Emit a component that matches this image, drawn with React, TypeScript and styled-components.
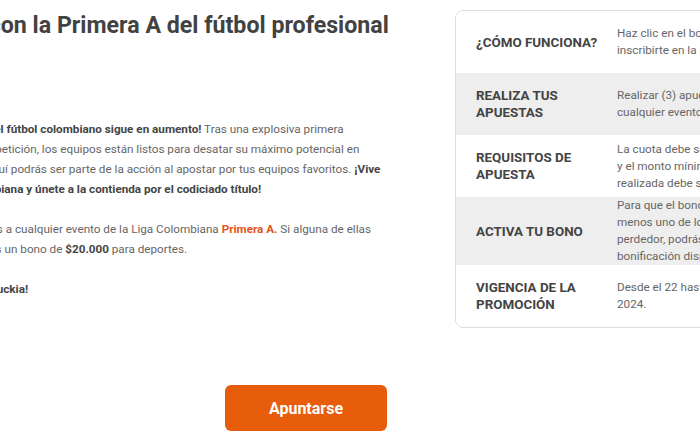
import React from "react";
import styled, { createGlobalStyle } from "styled-components";

const Global = createGlobalStyle`
  html, body { margin: 0; padding: 0; overflow: hidden; background: #fff; }
  body { font-family: Roboto, "Liberation Sans", Arial, sans-serif; }
`;

const Page = styled.div`
  width: 700px;
  height: 441px;
  overflow: hidden;
`;

const Main = styled.div`
  display: flex;
  align-items: flex-start;
  gap: 38px;
`;

const LeftCol = styled.section`
  flex: 0 0 520px;
  margin-left: -103px;
`;

const Title = styled.h1`
  margin: 10px 0 0;
  font-size: 23.2px;
  line-height: 30px;
  font-weight: 700;
  color: #424242;
  white-space: nowrap;
`;

const Text = styled.p<{ $first?: boolean }>`
  margin: ${(p) => (p.$first ? "79px" : "20px")} 0 0;
  font-size: 11.7px;
  line-height: 20px;
  color: #666;
  white-space: nowrap;
  b { color: #444; font-weight: 700; }
`;

const Accent = styled.b`
  && { color: #e8541a; }
`;

const Panel = styled.section`
  flex: 0 0 520px;
  margin-top: 10px;
  border: 1px solid #ddd;
  border-radius: 8px;
  overflow: hidden;
`;

const Row = styled.div<{ $shaded?: boolean }>`
  display: grid;
  grid-template-columns: 161px 1fr;
  align-items: center;
  min-height: 62px;
  background: ${(p) => (p.$shaded ? "#eeeeee" : "#ffffff")};
`;

const Label = styled.div`
  padding: 0 20px;
  font-size: 13.4px;
  line-height: 17px;
  font-weight: 700;
  color: #444;
  text-transform: uppercase;
  white-space: nowrap;
`;

const Value = styled.div`
  padding-right: 20px;
  font-size: 11.7px;
  line-height: 17px;
  color: #666;
  white-space: nowrap;
`;

const Footer = styled.div`
  display: flex;
  padding-left: 225px;
  margin-top: 57px;
`;

const Button = styled.button`
  width: 162px;
  height: 46px;
  border: 0;
  border-radius: 6px;
  background: #e85d0c;
  color: #fff;
  font-family: Roboto, "Liberation Sans", Arial, sans-serif;
  font-size: 16px;
  font-weight: 700;
  cursor: pointer;
`;

const rows: { label: React.ReactNode; lines: string[] }[] = [
  { label: "¿Cómo funciona?", lines: ["Haz clic en el botón “Apuntarse” para", "inscribirte en la promoción."] },
  { label: <>Realiza tus<br />apuestas</>, lines: ["Realizar (3) apuestas deportivas a", "cualquier evento de la Liga Colombiana."] },
  { label: <>Requisitos de<br />apuesta</>, lines: ["La cuota debe ser mínimo de 1.50", "y el monto mínimo de cada apuesta", "realizada debe ser de $10.000."] },
  { label: "Activa tu bono", lines: ["Para que el bono se active, al", "menos uno de los eventos debe ser", "perdedor, podrás reclamar tu", "bonificación disponible."] },
  { label: <>Vigencia de la<br />promoción</>, lines: ["Desde el 22 hasta el 30 de enero de", "2024."] },
];

export default function App() {
  return (
    <Page>
      <Global />
      <Main>
        <LeftCol>
          <Title>Apuesta con la Primera A del fútbol profesional</Title>
          <Text $first>
            <b>¡La adrenalina por el fútbol colombiano sigue en aumento!</b> Tras una explosiva primera<br />
            temporada de competición, los equipos están listos para desatar su máximo potencial en<br />
            el campeonato y aquí podrás ser parte de la acción al apostar por tus equipos favoritos. <b>¡Vive<br />
            toda la Liga Colombiana y únete a la contienda por el codiciado título!</b>
          </Text>
          <Text>
            Realiza (3) apuestas a cualquier evento de la Liga Colombiana <Accent>Primera A.</Accent> Si alguna de ellas<br />
            es fallida, obtendrás un bono de <b>$20.000</b> para deportes.
          </Text>
          <Text>
            <b>¡Apuesta hoy con Luckia!</b>
          </Text>
        </LeftCol>
        <Panel>
          {rows.map((r, i) => (
            <Row key={i} $shaded={i % 2 === 1}>
              <Label>{r.label}</Label>
              <Value>
                {r.lines.map((l, j) => (
                  <React.Fragment key={j}>
                    {l}
                    {j < r.lines.length - 1 && <br />}
                  </React.Fragment>
                ))}
              </Value>
            </Row>
          ))}
        </Panel>
      </Main>
      <Footer>
        <Button>Apuntarse</Button>
      </Footer>
    </Page>
  );
}
